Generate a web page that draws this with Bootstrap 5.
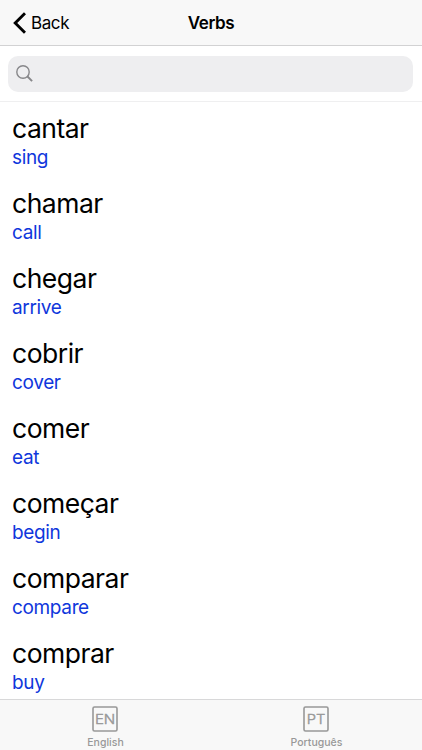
<!DOCTYPE html>
<html lang="en">
<head>
<meta charset="utf-8">
<meta name="viewport" content="width=device-width, initial-scale=1">
<title>Verbs</title>
<link href="https://cdn.jsdelivr.net/npm/bootstrap@5.3.0/dist/css/bootstrap.min.css" rel="stylesheet">
<style>
body { font-family: Inter, "Liberation Sans", sans-serif; color: #000; height: 750px; background: #fff; }
.top-bar { height: 46px; background: #f8f8f8; border-bottom: 1px solid #d2d2d3; }
.top-bar a, .top-bar h1 { font-size: 17px; line-height: 24px; color: #000; }
.top-bar a { padding-left: 13px; }
.back-label { letter-spacing: -.4px; margin-left: 5px; }
.top-bar h1 { font-weight: 600; letter-spacing: -.35px; }
.search-area { height: 56px; padding: 9.5px 9px 9.5px 8.4px; border-bottom: 1px solid #efeff0; }
.search-box { background: #eeeef0; border-radius: 10px; padding-left: 8px; }
.verb { height: 75px; padding: 9px 13px 0 12px; }
.word { font-size: 26.5px; line-height: 34px; letter-spacing: -.5px; }
.meaning { font-size: 19px; line-height: 24px; letter-spacing: -.35px; color: #0f37dc; padding-top: 1px; }
.tab-bar { height: 51px; background: #f8f8f8; border-top: 1px solid #d8d8d9; }
.tab-bar a { color: #989898; padding-top: 6px; }
.tab-label { font-size: 10.5px; line-height: 14px; font-weight: 500; letter-spacing: .02px; margin-top: 4px; }
</style>
<script src="https://cdn.jsdelivr.net/npm/bootstrap@5.3.0/dist/js/bootstrap.bundle.min.js"></script>
</head>
<body class="d-flex flex-column overflow-hidden">
<header class="top-bar row g-0 align-items-center flex-shrink-0">
  <div class="col"><a href="#" class="d-flex align-items-center text-decoration-none">
    <svg width="13" height="22" viewBox="0 0 13 22" fill="none" stroke="#000" stroke-width="2.9" aria-hidden="true"><path d="M12 1.2 2.2 11 12 20.8"/></svg>
    <span class="back-label">Back</span></a></div>
  <h1 class="col-auto m-0">Verbs</h1>
  <div class="col"></div>
</header>
<div class="search-area flex-shrink-0">
  <div class="search-box h-100 d-flex align-items-center">
    <svg width="18" height="18" viewBox="0 0 18 18" fill="none" stroke="#87878a" aria-label="Search"><circle cx="7" cy="7" r="6.2" stroke-width="1.4"/><path d="m11.5 11.5 4.6 4.7" stroke-width="1.9"/></svg>
  </div>
</div>
<main class="flex-grow-1 overflow-hidden">
  <ul class="list-unstyled m-0">
    <li class="verb"><div class="word">cantar</div><div class="meaning">sing</div></li>
    <li class="verb"><div class="word">chamar</div><div class="meaning">call</div></li>
    <li class="verb"><div class="word">chegar</div><div class="meaning">arrive</div></li>
    <li class="verb"><div class="word">cobrir</div><div class="meaning">cover</div></li>
    <li class="verb"><div class="word">comer</div><div class="meaning">eat</div></li>
    <li class="verb"><div class="word">começar</div><div class="meaning">begin</div></li>
    <li class="verb"><div class="word">comparar</div><div class="meaning">compare</div></li>
    <li class="verb"><div class="word">comprar</div><div class="meaning">buy</div></li>
  </ul>
</main>
<nav class="tab-bar row g-0 flex-shrink-0">
  <a href="#" class="col d-flex flex-column align-items-center text-decoration-none">
    <svg width="27" height="26" viewBox="0 0 27 26" fill="none" stroke="#989898" stroke-width="1.6"><rect x="1" y="1" width="24" height="24" rx="1.5"/><text x="2.9" y="17.5" font-size="12.5" font-weight="300" textLength="20.4" lengthAdjust="spacingAndGlyphs" fill="#989898" stroke-width=".4">EN</text></svg>
    <span class="tab-label">English</span>
  </a>
  <a href="#" class="col d-flex flex-column align-items-center text-decoration-none">
    <svg width="27" height="26" viewBox="0 0 27 26" fill="none" stroke="#989898" stroke-width="1.6"><rect x="1" y="1" width="24" height="24" rx="1.5"/><text x="3.8" y="17.5" font-size="12.5" font-weight="300" textLength="18.6" lengthAdjust="spacingAndGlyphs" fill="#989898" stroke-width=".4">PT</text></svg>
    <span class="tab-label">Português</span>
  </a>
</nav>
</body>
</html>
